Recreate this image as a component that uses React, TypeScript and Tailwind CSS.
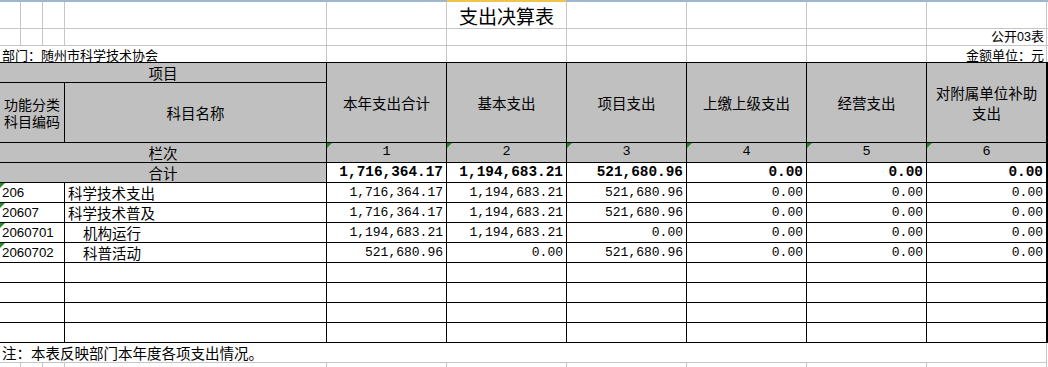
import React from "react";

const G = "border-[#c6c6c6]";
const cn = "font-['Noto_Sans_CJK_SC',sans-serif]";
const mono = "font-['Liberation_Mono',monospace]";
const sans = "font-['Liberation_Sans',sans-serif]";

function Tri() {
  return (
    <span className="absolute left-0 top-0 h-0 w-0 border-t-[5px] border-r-[5px] border-t-[#1f8f1f] border-r-transparent" />
  );
}

const topW = ["w-[21px]", "w-[22px]", "w-[22px]", "w-[262px]", "w-[120px]", "w-[120px]", "w-[120px]", "w-[120px]", "w-[120px]", "w-[120px]"];

function TopRow({ h, children, bottom = true }: { h: string; children: (i: number) => React.ReactNode; bottom?: boolean }) {
  return (
    <div className={`flex ${h} ${bottom ? `border-b ${G}` : ""}`}>
      {topW.map((w, i) => (
        <div key={i} className={`${w} shrink-0 border-r ${G} relative flex`}>
          {children(i)}
        </div>
      ))}
    </div>
  );
}

const rows = [
  { code: "206", name: "科学技术支出", ind: false, v: ["1,716,364.17", "1,194,683.21", "521,680.96", "0.00", "0.00", "0.00"] },
  { code: "20607", name: "科学技术普及", ind: false, v: ["1,716,364.17", "1,194,683.21", "521,680.96", "0.00", "0.00", "0.00"] },
  { code: "2060701", name: "机构运行", ind: true, v: ["1,194,683.21", "1,194,683.21", "0.00", "0.00", "0.00", "0.00"] },
  { code: "2060702", name: "科普活动", ind: true, v: ["521,680.96", "0.00", "521,680.96", "0.00", "0.00", "0.00"] },
];

const numW = ["w-[120px]", "w-[120px]", "w-[120px]", "w-[120px]", "w-[120px]", "w-[121px] border-r-2"];

export default function App() {
  return (
    <div className={`w-[1048px] h-[367px] overflow-hidden bg-white text-black ${cn}`}>
      {/* top header strip */}
      <div className="flex h-[2px] bg-[#9eb6ce]">
        <div className="w-[447px] shrink-0" />
        <div className="w-[119px] shrink-0 bg-[#f2c44f]" />
      </div>

      {/* row 1 - title */}
      <TopRow h="h-[27px]">
        {(i) =>
          i === 5 ? (
            <div className="w-full flex items-end justify-center pb-[1px]">
              <span className="text-[19px] leading-[22px] whitespace-nowrap">支出决算表</span>
            </div>
          ) : null
        }
      </TopRow>

      {/* row 2 */}
      <TopRow h="h-[17px]">
        {(i) =>
          i === 9 ? (
            <div className="w-full flex items-end justify-end pr-[2px]">
              <span className="text-[13px] leading-[15px] whitespace-nowrap">
                公开<span className={`${sans} text-[12.5px]`}>03</span>表
              </span>
            </div>
          ) : null
        }
      </TopRow>

      {/* row 3 */}
      <div className="flex h-[16px]">
        <div className={`w-[327px] shrink-0 border-r ${G} flex items-end pl-[2px]`}>
          <span className="text-[13px] leading-[15px] whitespace-nowrap">部门：随州市科学技术协会</span>
        </div>
        {numW.map((_, i) => (
          <div key={i} className={`w-[120px] shrink-0 border-r ${G} flex items-end justify-end pr-[2px]`}>
            {i === 5 && <span className="text-[13px] leading-[15px] whitespace-nowrap">金额单位：元</span>}
          </div>
        ))}
      </div>

      {/* table */}
      <div className="border-t border-black w-[1048px]">
        {/* header */}
        <div className="flex h-[80px] bg-[#c0c0c0] text-[14.5px]">
          <div className="w-[327px] shrink-0 flex flex-col">
            <div className="h-[20px] border-b border-r border-black flex items-center justify-center leading-[18px]">项目</div>
            <div className="flex h-[60px]">
              <div className="w-[65px] shrink-0 border-b border-r border-black flex flex-col items-center justify-center text-center text-[14px] leading-[17px] pt-[1px]">
                <span>功能分类</span>
                <span>科目编码</span>
              </div>
              <div className="w-[262px] shrink-0 border-b border-r border-black flex items-center justify-center leading-[18px]">科目名称</div>
            </div>
          </div>
          {["本年支出合计", "基本支出", "项目支出", "上缴上级支出", "经营支出"].map((t) => (
            <div key={t} className="w-[120px] shrink-0 border-b border-r border-black flex items-center justify-center leading-[18px]">
              {t}
            </div>
          ))}
          <div className="w-[121px] shrink-0 border-b border-r-2 border-black flex flex-col items-center justify-center text-center leading-[20px] pt-[1px]">
            <span>对附属单位补助</span>
            <span>支出</span>
          </div>
        </div>

        {/* 栏次 */}
        <div className="flex h-[20px] bg-[#c0c0c0]">
          <div className="w-[327px] shrink-0 border-b border-r border-black flex items-center justify-center text-[14.5px] leading-[18px]">栏次</div>
          {numW.map((w, i) => (
            <div key={i} className={`${w} shrink-0 border-b border-r border-black relative flex items-center justify-center ${mono} text-[13.5px]`}>
              <Tri />
              {i + 1}
            </div>
          ))}
        </div>

        {/* 合计 */}
        <div className="flex h-[20px]">
          <div className="w-[327px] shrink-0 border-b border-r border-black bg-[#c0c0c0] flex items-center justify-center text-[14.5px] leading-[18px]">合计</div>
          {["1,716,364.17", "1,194,683.21", "521,680.96", "0.00", "0.00", "0.00"].map((v, i) => (
            <div key={i} className={`${numW[i]} shrink-0 border-b border-r border-black flex items-center justify-end pr-[3px] ${mono} font-bold text-[14.4px] pt-[1px]`}>
              {v}
            </div>
          ))}
        </div>

        {rows.map((r) => (
          <div key={r.code} className="flex h-[20px]">
            <div className={`w-[65px] shrink-0 border-b border-r border-black relative flex items-center pl-[2px] pt-[1px] ${sans} text-[13.3px]`}>
              <Tri />
              {r.code}
            </div>
            <div className={`w-[262px] shrink-0 border-b border-r border-black flex items-center text-[14.5px] leading-[18px] ${r.ind ? "pl-[18px]" : "pl-[3px]"}`}>
              {r.name}
            </div>
            {r.v.map((v, i) => (
              <div key={i} className={`${numW[i]} shrink-0 border-b border-r border-black flex items-center justify-end pr-[3px] pt-[1px] ${mono} text-[13px]`}>
                {v}
              </div>
            ))}
          </div>
        ))}

        {[0, 1, 2, 3].map((k) => (
          <div key={k} className="flex h-[20px]">
            <div className="w-[65px] shrink-0 border-b border-r border-black" />
            <div className="w-[262px] shrink-0 border-b border-r border-black" />
            {numW.map((w, i) => (
              <div key={i} className={`${w} shrink-0 border-b border-r border-black`} />
            ))}
          </div>
        ))}
      </div>

      {/* footer */}
      <div className={`w-[1047px] h-[20px] border-b border-r ${G} flex items-center pl-[2px]`}>
        <span className="text-[14.5px] leading-[18px] whitespace-nowrap">注：本表反映部门本年度各项支出情况。</span>
      </div>
      <TopRow h="h-[10px]" bottom={false}>
        {() => null}
      </TopRow>
    </div>
  );
}
